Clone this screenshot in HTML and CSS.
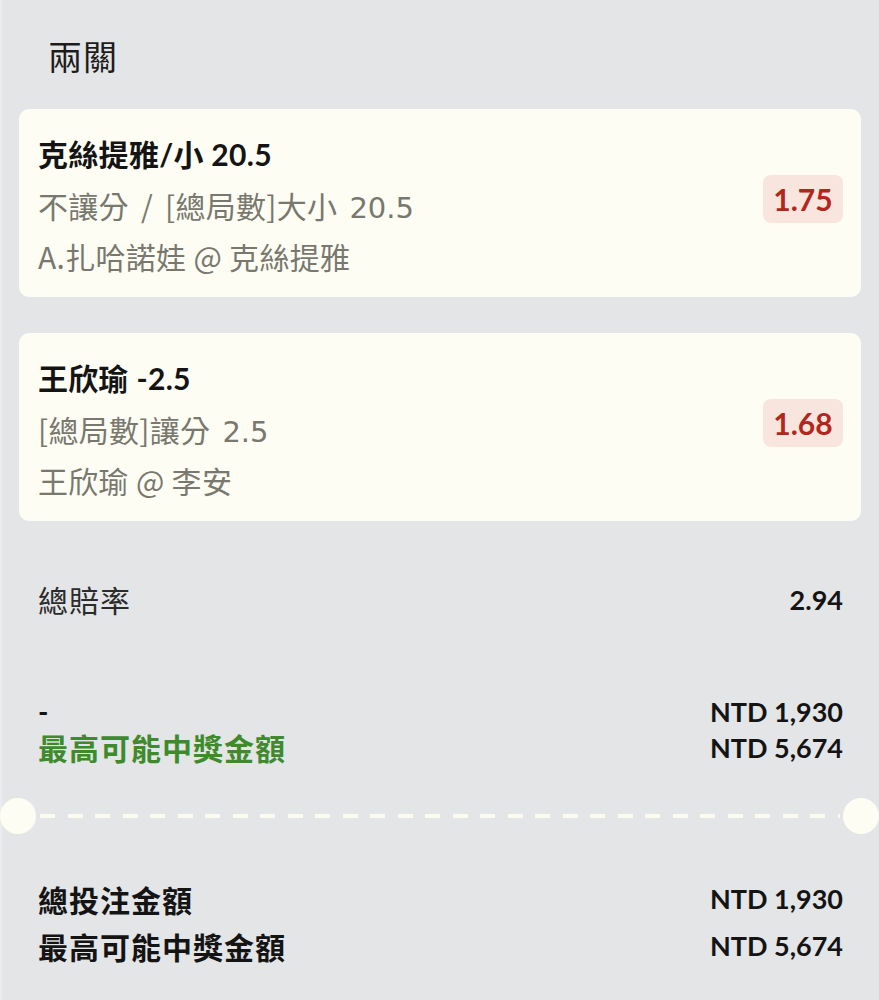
FILE: index.html
```html
<!DOCTYPE html>
<html lang="zh-Hant">
<head>
<meta charset="utf-8">
<title>兩關</title>
<link rel="stylesheet" href="styles.css">
</head>
<body>
<div class="page">
  <div class="inner">
    <h1 class="title">兩關</h1>
    <div class="cards">
      <div class="card">
        <div class="card-text">
          <div class="pick">克絲提雅/小 20.5</div>
          <div class="sub market">不讓分 / [總局數]大小 <span class="num">20.5</span></div>
          <div class="sub">A.扎哈諾娃 @ 克絲提雅</div>
        </div>
        <div class="odds">1.75</div>
      </div>
      <div class="card">
        <div class="card-text">
          <div class="pick">王欣瑜 -2.5</div>
          <div class="sub market">[總局數]讓分 <span class="num">2.5</span></div>
          <div class="sub">王欣瑜 @ 李安</div>
        </div>
        <div class="odds">1.68</div>
      </div>
    </div>

    <div class="row total-odds">
      <span class="label">總賠率</span>
      <span class="value">2.94</span>
    </div>

    <div class="amounts">
      <div class="row amt">
        <span class="dash">-</span>
        <span class="value">NTD 1,930</span>
      </div>
      <div class="row amt">
        <span class="green">最高可能中獎金額</span>
        <span class="value">NTD 5,674</span>
      </div>
    </div>
  </div>

  <div class="divider">
    <span class="hole"></span>
    <span class="dashes"></span>
    <span class="hole"></span>
  </div>

  <div class="inner totals">
    <div class="row tot">
      <span class="strong">總投注金額</span>
      <span class="value">NTD 1,930</span>
    </div>
    <div class="row tot">
      <span class="strong">最高可能中獎金額</span>
      <span class="value">NTD 5,674</span>
    </div>
  </div>
</div>
</body>
</html>
```

FILE: styles.css
```css
* { box-sizing: border-box; }

html, body {
  margin: 0;
  padding: 0;
}

body {
  background: #e4e5e7;
  font-family: Lato, "Noto Sans CJK TC", sans-serif;
  color: #1a1a1a;
}

.page {
  width: 879px;
  min-height: 1000px;
  border-left: 2px solid #ebecee;
}

.inner {
  padding: 0 18px 0 17px;
}

.title {
  margin: 0;
  padding: 34px 0 0 29px;
  font-family: "Noto Sans CJK TC", sans-serif;
  font-size: 34px;
  letter-spacing: 1px;
  line-height: 44px;
  font-weight: 400;
  color: #1c1c1c;
  margin-bottom: 31px;
}

.cards {
  display: flex;
  flex-direction: column;
  gap: 36px;
}

.card {
  background: #fdfdf4;
  border-radius: 10px;
  height: 188px;
  padding: 20px 18px 15px 19px;
  display: flex;
  align-items: center;
  justify-content: space-between;
}

.card-text {
  font-size: 30px;
  line-height: 51px;
}

.pick {
  font-weight: 700;
  color: #141414;
  letter-spacing: 0.3px;
}

.sub {
  font-family: "Noto Sans CJK TC", sans-serif;
  color: #78786f;
  letter-spacing: 0.3px;
  height: 51px;
}

.sub.market {
  word-spacing: 5px;
}

.num {
  font-family: "DejaVu Sans", sans-serif;
  font-size: 29px;
  line-height: 1;
  letter-spacing: 0;
}

.odds {
  width: 80px;
  height: 48px;
  border-radius: 8px;
  background: #f8e6de;
  color: #b3261e;
  font-size: 30px;
  font-weight: 700;
  display: flex;
  align-items: center;
  justify-content: center;
  margin-bottom: 14px;
}

.row {
  display: flex;
  justify-content: space-between;
  align-items: center;
  padding: 0 18px 0 19px;
}

.total-odds {
  margin-top: 58px;
  height: 40px;
  font-size: 30px;
}

.total-odds .label {
  color: #2b2b2b;
  letter-spacing: 1px;
}

.value {
  font-weight: 700;
  font-size: 27px;
  color: #141414;
  letter-spacing: 0;
}

.amounts {
  margin-top: 74px;
}

.amt {
  height: 36px;
  font-size: 30px;
}

.dash {
  font-weight: 700;
  font-size: 28px;
  color: #141414;
}

.green {
  color: #3e8a2c;
  font-weight: 700;
  letter-spacing: 1px;
}

.divider {
  margin-top: 33px;
  height: 36px;
  display: flex;
  align-items: center;
  margin-left: -2px;
}

.hole {
  width: 36px;
  height: 36px;
  border-radius: 50%;
  background: #fdfdf3;
  flex: none;
}

.dashes {
  flex: 1;
  height: 4px;
  margin: 0 3px 0 4px;
  background: repeating-linear-gradient(to right, #fbfbf1 0 15px, transparent 15px 27.5px);
}

.totals {
  padding-top: 41px;
}

.tot {
  height: 47px;
  font-size: 30px;
}

.strong {
  font-weight: 700;
  color: #141414;
  letter-spacing: 1px;
}
```
